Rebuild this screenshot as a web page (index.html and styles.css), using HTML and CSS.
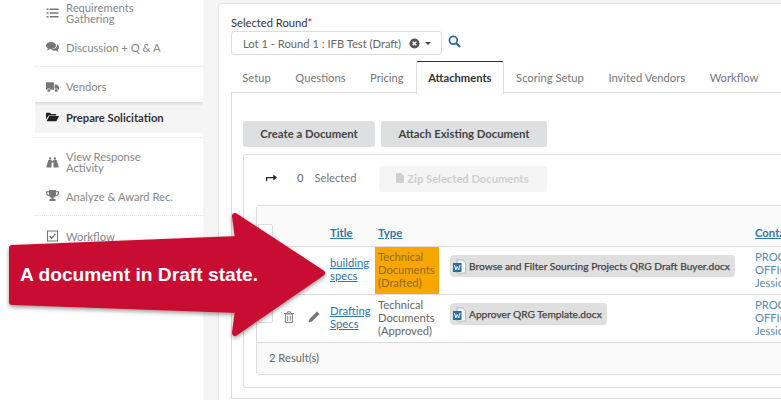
FILE: index.html
```html
<!DOCTYPE html>
<html lang="en">
<head>
<meta charset="utf-8">
<title>Attachments</title>
<link rel="stylesheet" href="styles.css">
</head>
<body>
<div class="app">
  <nav class="sidebar">
    <div class="side-group first">
      <a class="side-item two"><svg class="ico" viewBox="0 0 12 12"><path d="M0 1.500h2v1.600H0zM3.200 1.500H12v1.600H3.200zM0 5.200h2v1.600H0zM3.200 5.200H12v1.600H3.200zM0 8.900h2v1.600H0zM3.200 8.900H12v1.600H3.200z"/></svg><span>Requirements<br>Gathering</span></a>
      <a class="side-item disc"><svg class="ico" viewBox="0 0 13 12"><ellipse cx="5" cy="4.500" rx="5" ry="3.600"/><path d="M2 7l-1 2.400L4.500 8z"/><path d="M11 3.600c1.300.7 2 1.700 2 2.900 0 1-.5 1.800-1.300 2.400l.8 2-2.800-1.300c-2 .3-3.800-.2-4.700-1.400 3.400.2 6.600-1.400 6-4.600z"/></svg><span>Discussion + Q &amp; A</span></a>
    </div>
    <div class="side-group vendors">
      <a class="side-item"><svg class="ico" viewBox="0 0 14 12"><path d="M0 1h8.500v8H0zM9.300 3.200h2.300L14 5.800V9H9.300z"/><circle cx="3" cy="9.700" r="1.900" stroke="#fff" stroke-width=".7"/><circle cx="11" cy="9.700" r="1.900" stroke="#fff" stroke-width=".7"/></svg><span>Vendors</span></a>
    </div>
    <a class="side-item active"><svg class="ico" viewBox="0 0 14 12"><path d="M0 1.500h4.500l1 1.300H11v1.500H3L0 8.500z"/><path d="M3.500 5H14l-2.800 5.500H.6z"/></svg><span>Prepare Solicitation</span></a>
    <div class="side-group response">
      <a class="side-item two"><svg class="ico" viewBox="0 0 12 12"><path d="M2.500 1.500h2.200v2h-2zM7.300 1.500h2.200v2h-2.200zM2 4h3.200v1h1.600V4H10l2 6v1.500H7V6.500H5v5H0V10z"/></svg><span>View Response<br>Activity</span></a>
      <a class="side-item award"><svg class="ico" viewBox="0 0 13 12"><path d="M3 0h7v1.200h3V3c0 1.800-1.500 3-3.500 3.300-.5.700-1.200 1.200-2 1.400V9H9.500v2h-6V9h1.900V7.700c-.8-.2-1.500-.7-2-1.400C1.500 6 0 4.800 0 3V1.200h3zM1.200 2.300V3c0 .9.700 1.700 1.900 2l-.2-2.700zM11.800 2.300H10.100L9.900 5c1.200-.3 1.900-1.100 1.900-2z"/></svg><span>Analyze &amp; Award Rec.</span></a>
    </div>
    <div class="side-group workflow">
      <a class="side-item"><svg class="ico" viewBox="0 0 12 12"><path fill="none" stroke="#777" stroke-width="1.100" d="M1 1h10v10H1z"/><path fill="none" stroke="#777" stroke-width="1.300" d="M3 6l2.200 2.200L9 3.800"/></svg><span>Workflow</span></a>
    </div>
  </nav>

  <main class="card">
    <div class="field-label">Selected Round<span class="req">*</span></div>
    <div class="select-row">
      <div class="select">
        <span>Lot 1 - Round 1 : IFB Test (Draft)</span>
        <svg class="clear" viewBox="0 0 12 12"><circle cx="6" cy="6" r="5.500" fill="#555"/><path d="M4 4l4 4M8 4l-4 4" stroke="#fff" stroke-width="1.500"/></svg>
        <span class="caret"></span>
      </div>
      <svg class="search" viewBox="0 0 13 13"><circle cx="5.300" cy="5.300" r="3.900" fill="none" stroke="#2a6f9e" stroke-width="1.800"/><path d="M8.200 8.200l3.800 3.800" stroke="#2a6f9e" stroke-width="2.200"/></svg>
    </div>
    <div class="tabs">
      <a class="tab">Setup</a>
      <a class="tab">Questions</a>
      <a class="tab">Pricing</a>
      <a class="tab on">Attachments</a>
      <a class="tab">Scoring Setup</a>
      <a class="tab">Invited Vendors</a>
      <a class="tab">Workflow</a>
    </div>
    <section class="panel">
      <div class="btn-row">
        <button class="btn btn-create">Create a Document</button>
        <button class="btn btn-attach">Attach Existing Document</button>
      </div>
      <div class="doc-box">
        <div class="sel-row">
          <svg class="share" viewBox="0 0 12 9"><path d="M0 4h8V1.200L12 4.500 8 7.800V5.300H1.300V8.500H0z"/></svg>
          <span class="sel-num">0</span>
          <span class="sel-txt">Selected</span>
          <button class="btn zip"><svg class="zip-ico" viewBox="0 0 9 11"><path d="M0 0h5.500L9 3.500V11H0z"/></svg>Zip Selected Documents</button>
        </div>
        <div class="table-box">
          <table class="docs">
            <colgroup><col class="c1"><col class="c2"><col class="c3"><col class="c4"><col class="c5"></colgroup>
            <thead>
              <tr><th><span class="check"></span></th><th><a class="lnk">Title</a></th><th class="type"><a class="lnk">Type</a></th><th></th><th><a class="lnk">Contact</a></th></tr>
            </thead>
            <tbody>
              <tr>
                <td><div class="acts"><span class="check"></span></div></td>
                <td class="title-cell"><a class="lnk">building specs</a></td>
                <td class="type draft">Technical Documents (Drafted)</td>
                <td class="chip-cell"><span class="chip"><svg class="word" viewBox="0 0 13 15"><use href="#w"/></svg>Browse and Filter Sourcing Projects QRG Draft Buyer.docx</span></td>
                <td class="contact">PROCUREMENT<br>OFFICER<br>Jessica</td>
              </tr>
              <tr>
                <td><div class="acts"><span class="check"></span>
                  <svg class="trash" viewBox="0 0 10 12"><path fill="none" stroke="#888" d="M1.500 3h7v8.500h-7zM0 2.500h10M3.500 2.500V.8h3v1.700M3.700 4.800v5M6.300 4.800v5"/></svg>
                  <svg class="pencil" viewBox="0 0 12 12"><path fill="#777" d="M9 .5L11.500 3 4 10.500.5 11.500 1.500 8z"/></svg></div></td>
                <td class="title-cell"><a class="lnk">Drafting Specs</a></td>
                <td class="type">Technical Documents (Approved)</td>
                <td class="chip-cell"><span class="chip"><svg class="word" viewBox="0 0 13 15"><use href="#w"/></svg>Approver QRG Template.docx</span></td>
                <td class="contact">PROCUREMENT<br>OFFICER<br>Jessica</td>
              </tr>
            </tbody>
          </table>
          <div class="results">2 Result(s)</div>
        </div>
      </div>
    </section>
  </main>
</div>

<svg class="defs" width="0" height="0"><defs>
  <g id="w"><path fill="#fff" stroke="#8aa" stroke-width=".7" d="M4 1h5.500L12.500 4v10H4z"/><path fill="#2b6cb5" d="M0 4h8.500v9H0z"/><path fill="none" stroke="#fff" stroke-width="1" d="M1.500 6l1.300 5 1.400-3.600L5.600 11 7 6"/></g>
</defs></svg>

<div class="callout">
  <svg class="arrow" viewBox="0 0 340 140" width="340" height="140">
    <defs><filter id="sh" x="-5%" y="-10%" width="110%" height="120%"><feDropShadow dx="0" dy="2" stdDeviation="2" flood-color="#000" flood-opacity=".4"/></filter></defs>
    <path filter="url(#sh)" fill="#c90e30" stroke="#c90e30" stroke-width="6" stroke-linejoin="round" d="M12 40L238 31 235 8 322 65 235 125 238 102 12 94z"/>
  </svg>
  <span class="callout-text">A document in Draft state.</span>
</div>
</body>
</html>
```
FILE: styles.css
```css
html, body { margin: 0; height: 400px; overflow: hidden; background: #fff; }
body { font-family: Lato, "Liberation Sans", sans-serif; font-size: 11.200px; color: #666; position: relative; width: 781px; }
.defs { position: absolute; }
.app { display: flex; height: 400px; width: 781px; overflow: hidden; padding-left: 35px; box-sizing: border-box; background: linear-gradient(90deg, #fff 203px, #f5f5f5 203px); }

.sidebar { flex: none; width: 168px; background: #fff; height: 400px; overflow: hidden; }
.side-group { border-bottom: 1px dotted #e4e4e4; box-sizing: border-box; }
.side-item { display: flex; align-items: center; gap: 7px; padding-left: 11px; height: 40px; color: #888; line-height: 11px; box-sizing: border-box; }
.ico { flex: none; width: 13px; height: 12px; fill: #777; }
.first { height: 67px; }
.first .two { height: 26px; }
.first .disc { height: 32px; padding-top: 10px; }
.vendors { height: 35px; border-bottom: 0; box-shadow: 0 2px 3px rgba(0,0,0,.12); position: relative; }
.vendors .side-item { height: 39px; }
.active { height: 31px; padding-bottom: 1px; background: #f5f5f5; color: #333; font-weight: 700; }
.active .ico { fill: #222; }
.response { height: 79px; border-top: 1px dotted #e4e4e4; margin-top: 4px; }
.response .two { height: 47px; }
.response .award { height: 22px; }
.workflow { border-bottom: 0; }

.card { flex: none; width: 800px; height: 397px; margin: 3px 0 0 15px; background: #fff; border: 1px solid #e4e4e4; border-bottom: 0; border-radius: 4px 4px 0 0; padding: 12px 0 0 12px; box-sizing: border-box; }
.field-label { font-size: 11.200px; color: #333; line-height: 14px; }
.req { color: #c9102f; }
.select-row { display: flex; align-items: center; gap: 6px; margin-top: 1px; }
.select { width: 211px; height: 24px; box-sizing: border-box; border: 1px solid #ddd; border-radius: 3px; display: flex; align-items: center; padding-left: 11px; color: #666; white-space: nowrap; }
.clear { width: 11px; height: 11px; margin-left: 8px; flex: none; }
.caret { margin-left: 5px; border: 3px solid transparent; border-top: 3px solid #444; border-bottom: 0; }
.search { width: 13px; height: 13px; margin-top: -4px; }

.tabs { display: flex; margin-top: 6px; margin-left: -1px; height: 32px; width: 800px; }
.tab { padding: 0 11.300px; line-height: 31px; color: #777; height: 31px; border: 1px solid transparent; border-bottom: 0; }
.tab.on { color: #333; font-weight: 700; border-color: #ddd; border-top-color: #333; background: #fff; height: 32px; border-radius: 2px 2px 0 0; position: relative; z-index: 1; }
.panel { border: 1px solid #ddd; margin-top: -1px; height: 307px; box-sizing: border-box; padding: 28px 0 0 11px; width: 700px; }
.btn-row { display: flex; gap: 6px; }
.btn { border: 0; border-radius: 3px; height: 26px; background: #dedfe0; color: #444; font: 700 11.300px Lato, "Liberation Sans", sans-serif; padding: 0 0 2px; }
.btn-create { width: 132px; }
.btn-attach { width: 166px; }
.doc-box { margin-top: 7px; border: 1px solid #ddd; border-radius: 3px; height: 234px; box-sizing: border-box; padding: 0 0 0 12px; }
.sel-row { display: flex; align-items: center; height: 50px; padding-bottom: 2px; box-sizing: border-box; }
.share { width: 11px; height: 9px; margin-left: 10px; margin-bottom: 4px; fill: #222; }
.sel-num { margin-left: 20px; margin-bottom: 4px; color: #666; }
.sel-txt { margin-left: 11px; margin-bottom: 4px; color: #777; }
.zip { width: 168px; background: #f5f5f5; color: #cfcfcf; margin-left: 22px; display: flex; align-items: center; justify-content: center; gap: 3px; font-size: 11.200px; }
.zip-ico { width: 8px; height: 10px; fill: #cfcfcf; }
.table-box { border: 1px solid #ddd; border-radius: 3px; height: 170px; box-sizing: border-box; background: #f9f9f9; width: 600px; }
.docs { border-collapse: collapse; table-layout: fixed; width: 600px; }
.c1 { width: 70px; } .c2 { width: 48px; } .c3 { width: 64px; } .c4 { width: 313px; } .c5 { width: 105px; }
.docs th { height: 40px; box-sizing: border-box; vertical-align: bottom; text-align: left; padding: 0 3px 7px; font-weight: 700; background: #fafafa; border-bottom: 1px solid #ddd; }
.docs td { height: 48px; box-sizing: border-box; padding: 0 3px 2px; border-bottom: 1px solid #ddd; background: #fff; line-height: 13px; vertical-align: middle; color: #666; }
.docs td:first-child, .docs th:first-child { padding-left: 1px; }
.docs td.title-cell { padding-bottom: 2px; }
.docs td.chip-cell { padding: 0 3px 8px 11px; }
.docs td.draft { background: #f9a602; color: #8f6a1c; }
.lnk { color: #2f76a6; text-decoration: underline; font-size: 11.300px; }
.docs td.contact { color: #5a8aad; white-space: nowrap; }
.check { display: block; width: 15px; height: 15px; border: 1px solid #ddd; border-radius: 2px; background: #fff; box-sizing: border-box; flex: none; }
.acts { display: flex; align-items: center; }
.acts .check { margin-top: -4px; }
.trash { width: 10px; height: 12px; margin-left: 11px; flex: none; }
.pencil { width: 12px; height: 12px; margin-left: 14px; flex: none; }
.chip { display: inline-flex; align-items: center; gap: 3px; height: 22px; background: #dfdfdf; border-radius: 4px; padding: 0 5px 0 3px; color: #444; font-size: 10.200px; -webkit-text-stroke: .25px #444; white-space: nowrap; }
.word { width: 13px; height: 15px; flex: none; }
.results { height: 31px; line-height: 29px; padding-left: 12px; color: #666; }

.callout { position: absolute; left: 0; top: 208px; width: 340px; height: 140px; }
.arrow { display: block; }
.callout-text { position: absolute; left: 20px; top: 56px; font: 700 19.200px/22px "Liberation Sans", Arial, sans-serif; color: #fff; white-space: nowrap; }
```
